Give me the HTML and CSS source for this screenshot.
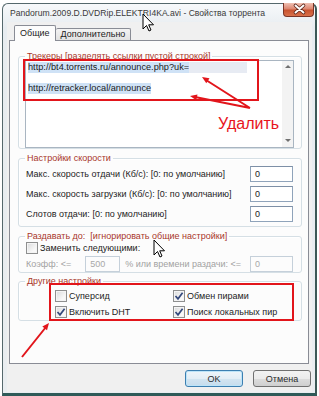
FILE: index.html
```html
<!DOCTYPE html>
<html lang="ru">
<head>
<meta charset="utf-8">
<title>Свойства торрента</title>
<link rel="stylesheet" href="styles.css">
</head>
<body>
<div class="window">
	<div class="titlebar">
		<span class="title">Pandorum.2009.D.DVDRip.ELEKTRI4KA.avi - Свойства торрента</span>
		<div class="close">
			<svg width="31" height="14" viewBox="0 0 31 14"><path d="M11.5 3.5 L19.5 10.5 M19.5 3.5 L11.5 10.5" stroke="#5a2418" stroke-width="3.6" stroke-linecap="round"/><path d="M11.5 3.5 L19.5 10.5 M19.5 3.5 L11.5 10.5" stroke="#fff" stroke-width="2" stroke-linecap="round"/></svg>
		</div>
	</div>
	<div class="client">
		<div class="tabs">
			<div class="tab active">Общие</div>
			<div class="tab">Дополнительно</div>
		</div>
		<div class="panel">
			<fieldset class="group trackers">
				<legend>Трекеры [разделять ссылки пустой строкой]</legend>
				<div class="memo">
					<div class="memo-text">
						<div class="line"><span class="sel">http://bt4.torrents.ru/announce.php?uk=</span><span class="sel-tail"></span></div>
						<div class="line"></div>
						<div class="line"><span class="sel">http://retracker.local/announce</span></div>
					</div>
					<div class="scrollbar">
						<span class="arrow-up"></span>
						<span class="arrow-down"></span>
					</div>
				</div>
			</fieldset>

			<fieldset class="group speed">
				<legend>Настройки скорости</legend>
				<div class="row"><span>Макс. скорость отдачи (Кб/с): [0: по умолчанию]</span><div class="edit">0</div></div>
				<div class="row"><span>Макс. скорость загрузки (Кб/с): [0: по умолчанию]</span><div class="edit">0</div></div>
				<div class="row"><span>Слотов отдачи: [0: по умолчанию]</span><div class="edit">0</div></div>
			</fieldset>

			<fieldset class="group seed">
				<legend>Раздавать до:&nbsp; [игнорировать общие настройки]</legend>
				<label class="check"><span class="box"></span>Заменить следующими:</label>
				<div class="row disabled">
					<span>Коэфф: &lt;=</span>
					<div class="edit ratio">500</div>
					<span class="after">% или времени раздачи: &lt;=</span>
					<div class="edit push">0</div>
				</div>
			</fieldset>

			<fieldset class="group other">
				<legend>Другие настройки</legend>
				<div class="checks">
					<label class="check"><span class="box"></span>Суперсид</label>
					<label class="check"><span class="box on"><svg width="10" height="10" viewBox="0 0 10 10"><path d="M1.5 5 L4 7.8 L8.6 1.8" fill="none" stroke="#34497c" stroke-width="1.7"/></svg></span>Обмен пирами</label>
					<label class="check"><span class="box on"><svg width="10" height="10" viewBox="0 0 10 10"><path d="M1.5 5 L4 7.8 L8.6 1.8" fill="none" stroke="#34497c" stroke-width="1.7"/></svg></span>Включить DHT</label>
					<label class="check"><span class="box on"><svg width="10" height="10" viewBox="0 0 10 10"><path d="M1.5 5 L4 7.8 L8.6 1.8" fill="none" stroke="#34497c" stroke-width="1.7"/></svg></span>Поиск локальных пир</label>
				</div>
			</fieldset>
		</div>
		<div class="buttons">
			<button class="btn default">OK</button>
			<button class="btn">Отмена</button>
		</div>
	</div>
</div>

<!-- annotations drawn over the screenshot -->
<svg class="marks" width="319" height="396" viewBox="0 0 319 396">
	<rect x="24" y="60" width="234" height="40" fill="none" stroke="#e2151b" stroke-width="2"/>
	<rect x="50" y="284" width="243" height="36" fill="none" stroke="#e2151b" stroke-width="2"/>
	<path d="M250 108 L206 80 M250 108 L195 97 M22 357 L46 327" stroke="#e2151b" stroke-width="2" fill="none"/>
	<polygon points="202,77 209.5,78.3 206.3,83.3" fill="#e2151b"/>
	<polygon points="190,96 197.5,94.4 196.3,100.3" fill="#e2151b"/>
	<polygon points="49,323 47,330.3 42.3,326.6" fill="#e2151b"/>
	<polygon points="143,14 143,29 146.5,25.5 149,31 151,30 148.7,24.8 153.5,24.8" fill="#fff" stroke="#000" stroke-width="1" stroke-linejoin="round"/>
	<polygon points="154,240 154,255 157.5,251.5 160,257 162,256 159.7,250.8 164.5,250.8" fill="#fff" stroke="#000" stroke-width="1" stroke-linejoin="round"/>
</svg>
<span class="note">Удалить</span>
</body>
</html>
```

FILE: styles.css
```css
body {
	margin: 0;
	position: relative;
	background: #fff;
	font-family: "Liberation Sans", Arial, sans-serif;
	font-size: 9px;
	color: #1c1c1c;
}
.window {
	margin: 3px 0 0 2px;
	width: 315px;
	height: 393px;
	box-sizing: border-box;
	border: 1px solid #55686c;
	border-right: 2px solid #3c5856;
	border-bottom: 3px solid #2f5a58;
	border-radius: 6px 6px 0 0;
	background: linear-gradient(#f7f9fb, #e7ecf0 24px, #e9edf0);
	padding: 0 3px 1px 4px;
	display: flex;
	flex-direction: column;
}
.titlebar {
	height: 18px;
	display: flex;
	align-items: center;
	justify-content: space-between;
}
.title {
	padding-left: 3px;
	font-size: 8.6px;
	color: #3a3a3a;
	white-space: nowrap;
}
.close {
	align-self: flex-start;
	margin: -1px -2px 0 0;
	width: 31px;
	height: 14px;
	box-sizing: border-box;
	border: 1px solid #7a3426;
	border-top: none;
	border-radius: 0 0 4px 4px;
	background: linear-gradient(#efc0b2, #dd8670 45%, #c8532f 55%, #d9714b);
}
.close svg {
	display: block;
	margin-top: -1px;
}
.client {
	flex: 1;
	background: #f0f0f0;
	display: flex;
	flex-direction: column;
	padding: 4px 1px 0 2px;
}
.tabs {
	display: flex;
	align-items: flex-end;
	height: 14px;
	margin-left: 5px;
	position: relative;
	z-index: 1;
}
.tab {
	height: 11px;
	line-height: 11px;
	padding: 0 5px;
	border: 1px solid #898c95;
	border-bottom: none;
	border-radius: 2px 2px 0 0;
	background: linear-gradient(#f3f3f3, #e2e2e2);
	margin-left: -1px;
	color: #1c1c1c;
}
.tab.active {
	height: 15px;
	line-height: 14px;
	margin-left: 0;
	margin-bottom: -1px;
	padding: 0 5px;
	background: #fcfcfc;
	position: relative;
	z-index: 2;
}
.tab.active + .tab {
	margin-left: 0;
	border-left: none;
}
.panel {
	width: 300px;
	height: 324px;
	box-sizing: border-box;
	border: 1px solid #898c95;
	background: #fcfcfc;
	padding: 10px 6px 0 8px;
	display: flex;
	flex-direction: column;
}
.group {
	margin: 0;
	min-width: 0;
	border: 1px solid #d5dfe5;
	border-radius: 3px;
	padding: 0 8px 4px 7px;
	box-shadow: inset 1px 1px 0 #fff;
}
.group legend {
	padding: 0 2px;
	margin-left: -1px;
	line-height: 10px;
	color: #a8362a;
}
.trackers {
	padding: 0 7px 0 6px;
}
.trackers legend {
	margin-left: 0;
}
.memo {
	margin-top: -1px;
	height: 88px;
	box-sizing: border-box;
	border: 1px solid #a9b5c1;
	background: #fff;
	display: flex;
}
.memo-text {
	flex: 1;
	padding: 1px 2px;
	font-size: 9.2px;
	color: #1a1a1a;
}
.line {
	height: 10.5px;
	line-height: 10.5px;
	display: flex;
	white-space: nowrap;
}
.sel {
	background: #cfe2f6;
}
.sel-tail {
	width: 58px;
	background: #e7ebf3;
}
.scrollbar {
	width: 11px;
	background: #f3f3f3;
	display: flex;
	flex-direction: column;
	justify-content: space-between;
	align-items: center;
	padding: 4px 0 5px;
}
.arrow-up {
	border: 3px solid transparent;
	border-top: none;
	border-bottom: 3px solid #707070;
}
.arrow-down {
	border: 3px solid transparent;
	border-bottom: none;
	border-top: 3px solid #707070;
}
.speed {
	margin-top: 4px;
	padding-top: 3px;
	display: flex;
	flex-direction: column;
	gap: 4px;
}
.row {
	height: 16px;
	display: flex;
	align-items: center;
	justify-content: space-between;
	white-space: nowrap;
}
.edit {
	width: 43px;
	height: 16px;
	box-sizing: border-box;
	border: 1px solid #8fa3ba;
	border-top-color: #7d8fa6;
	background: #fff;
	padding-left: 4px;
	line-height: 14px;
	color: #1a1a1a;
}
.seed {
	margin-top: 4px;
	padding: 1px 8px 0 7px;
	display: flex;
	flex-direction: column;
	gap: 2px;
}
.disabled {
	justify-content: flex-start;
	color: #a2a2a2;
}
.disabled .edit {
	border-color: #c5d0da;
	background: #fcfcfc;
	color: #a8a8a8;
}
.edit.ratio {
	width: 35px;
	margin-left: 14px;
}
.after {
	margin-left: 5px;
}
.edit.push {
	margin-left: auto;
}
.check {
	height: 12px;
	display: flex;
	align-items: center;
	gap: 2px;
	white-space: nowrap;
}
.box {
	flex: none;
	width: 12px;
	height: 12px;
	box-sizing: border-box;
	border: 1px solid #8e8f8f;
	background: linear-gradient(135deg, #d9dadb, #f8f8f8 70%);
	box-shadow: inset 0 0 0 1px #f4f4f4;
	display: flex;
	align-items: center;
	justify-content: center;
}
.box svg {
	display: block;
}
.other {
	margin-top: 3px;
	padding: 4px 8px 2px 36px;
}
.other legend {
	margin-left: -30px;
}
.checks {
	display: grid;
	grid-template-columns: 118px 100px;
	row-gap: 4px;
}
.buttons {
	margin-top: 6px;
	display: flex;
	justify-content: flex-end;
	gap: 10px;
}
.btn {
	width: 58px;
	height: 17px;
	box-sizing: border-box;
	border: 1px solid #707070;
	border-radius: 3px;
	background: linear-gradient(#f2f2f2, #ebebeb 50%, #dddddd 50%, #cfcfcf);
	font-family: "Liberation Sans", Arial, sans-serif;
	font-size: 9px;
	color: #2a2a2a;
	padding: 0;
}
.btn.default {
	border-color: #3c7fb1;
	background: linear-gradient(#eef5fa, #e3eef6 50%, #d3e5f1 50%, #c6dced);
	box-shadow: inset 0 0 0 1px #bde4f8;
}
.marks {
	position: absolute;
	left: 0;
	top: 0;
	pointer-events: none;
}
.note {
	position: absolute;
	left: 218px;
	top: 116px;
	font-size: 16px;
	line-height: 16px;
	color: #e8141c;
}
```
